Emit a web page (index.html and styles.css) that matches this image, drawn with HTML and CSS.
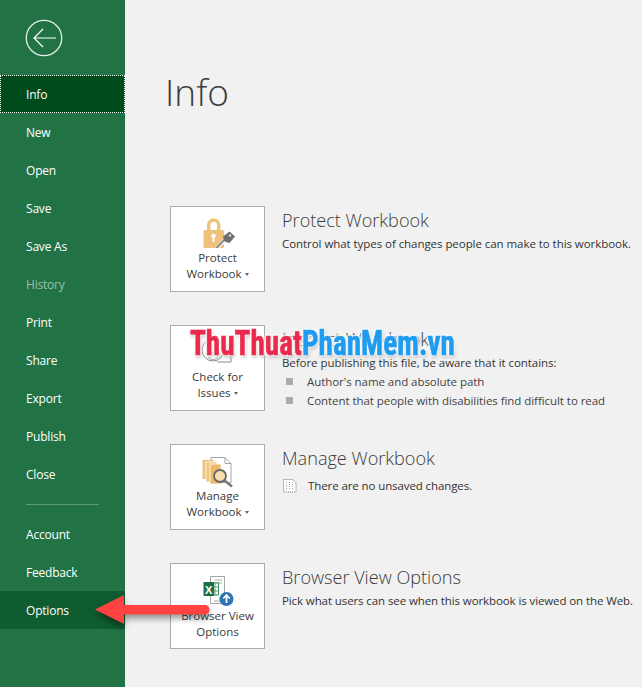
FILE: index.html
```html
<!DOCTYPE html>
<html lang="en">
<head>
<meta charset="utf-8">
<title>Info</title>
<link rel="stylesheet" href="styles.css">
</head>
<body>
<div class="app">
  <nav class="sidebar">
    <div class="back">
      <svg class="back-icon" width="38" height="38" viewBox="0 0 38 38"><circle cx="19" cy="19" r="17.7" fill="none" stroke="#e4eee8" stroke-width="1.3"/><path d="M31 19H9M18 10l-9 9 9 9" fill="none" stroke="#fff" stroke-width="1.2"/></svg>
    </div>
    <a class="item active">Info</a>
    <a class="item">New</a>
    <a class="item">Open</a>
    <a class="item">Save</a>
    <a class="item">Save As</a>
    <a class="item disabled">History</a>
    <a class="item">Print</a>
    <a class="item">Share</a>
    <a class="item">Export</a>
    <a class="item">Publish</a>
    <a class="item">Close</a>
    <div class="divider"></div>
    <a class="item">Account</a>
    <a class="item">Feedback</a>
    <a class="item hover">Options</a>
  </nav>
  <main class="main">
    <h1 class="title">Info</h1>
    <section class="row">
      <button class="tile">
        <svg class="tile-icon" width="36" height="36" viewBox="0 0 36 36"><path d="M7 17V11a6.700 6.700 0 0 1 13.400 0v6h-3.400V11a3.300 3.300 0 0 0-6.600 0v6z" fill="#eec27c"/><rect x="3.500" y="16" width="20.500" height="18" rx="1.500" fill="#eec27c"/><circle cx="13.500" cy="22" r="2.300" fill="#fff"/><rect x="12.600" y="23" width="1.800" height="5" fill="#fff"/><path d="M15 33.500l9-9.500 2.500 2.500-8 8.500h-3z" fill="#fff"/><path d="M15.500 33.500l9-9.500 1.500 1.500-8 8.500h-2.500z" fill="#8a8a8a"/><path d="M23 22.500l6.500-5 5.500 5-5.500 6.500-5-1.500z" fill="#6e6e6e"/><circle cx="30" cy="21.500" r="1.200" fill="#ddd"/></svg>
        <span class="tile-label">Protect<br>Workbook<i class="caret"></i></span>
      </button>
      <div class="desc">
        <h2 class="heading">Protect Workbook</h2>
        <p class="text">Control what types of changes people can make to this workbook.</p>
      </div>
    </section>
    <section class="row">
      <button class="tile">
        <svg class="tile-icon" width="36" height="36" viewBox="0 0 36 36"><circle cx="13" cy="17" r="11" fill="none" stroke="#8a8a8a"/><path d="M8 24a6 6 0 0 0 10 0" fill="none" stroke="#a5a5a5"/><path d="M22 12h9v17H17" fill="none" stroke="#8a8a8a"/></svg>
        <span class="tile-label">Check for<br>Issues<i class="caret"></i></span>
      </button>
      <div class="desc">
        <h2 class="heading">Inspect Workbook</h2>
        <p class="text">Before publishing this file, be aware that it contains:</p>
        <ul class="list">
          <li class="list-item">Author's name and absolute path</li>
          <li class="list-item">Content that people with disabilities find difficult to read</li>
        </ul>
      </div>
    </section>
    <section class="row">
      <button class="tile">
        <svg class="tile-icon" width="36" height="36" viewBox="0 0 36 36"><path d="M11 5.500h14l6 6v19H11z" fill="#fff" stroke="#a5a5a5"/><path d="M25 5.500v6h6" fill="none" stroke="#a5a5a5"/><rect x="2.500" y="8" width="11" height="19" fill="#f0c47c"/><rect x="6" y="10" width="11" height="20" fill="#f0c47c" stroke="#fff" stroke-width=".8"/><rect x="10" y="12" width="11" height="20" fill="#eeb968" stroke="#fff" stroke-width=".8"/><circle cx="20" cy="24" r="6" fill="#f6dcb0" stroke="#666" stroke-width="1.800"/><path d="M24.500 28.500L32 34.500" stroke="#7a7a7a" stroke-width="2.600"/></svg>
        <span class="tile-label">Manage<br>Workbook<i class="caret"></i></span>
      </button>
      <div class="desc">
        <h2 class="heading">Manage Workbook</h2>
        <p class="note"><svg class="note-icon" width="16" height="15" viewBox="0 0 16 15"><path d="M1.500 1.500h9l3.500 3v9.500H1.500z" fill="#fff" stroke="#777" stroke-dasharray="1 1"/><path d="M4.500 4v8M7.500 4v8M10.500 4v8" stroke="#aaa" stroke-dasharray="1 1"/></svg>There are no unsaved changes.</p>
      </div>
    </section>
    <section class="row">
      <button class="tile">
        <svg class="tile-icon" width="36" height="36" viewBox="0 0 36 36"><path d="M10.500 5.500h14v27h-14z" fill="#fff" stroke="#a5a5a5"/><path d="M15 9h7M15 12h7M19 27h3M14 30h8" stroke="#a8a8a8"/><path d="M12 12h6.500v12H12z" fill="#fff" stroke="#2d8a57"/><path d="M12 16h6.500M12 20h6.500M15 12v12" stroke="#5aa57f"/><path d="M3.500 11h10.500v14H3.500z" fill="#1e7145"/><text class="xl" x="5" y="22.500">X</text><circle cx="26.500" cy="28" r="7" fill="#2f75b5"/><path d="M26.500 32v-7.500M23.300 27.500l3.200-3.500 3.200 3.500" fill="none" stroke="#fff" stroke-width="1.800"/></svg>
        <span class="tile-label tile-label-low">Browser View<br>Options</span>
      </button>
      <div class="desc">
        <h2 class="heading">Browser View Options</h2>
        <p class="text text-tight">Pick what users can see when this workbook is viewed on the Web.</p>
      </div>
    </section>
  </main>
  <div class="watermark"><span class="wm-red">ThuThuat</span><span class="wm-blue">PhanMem.vn</span></div>
  <svg class="arrow" width="130" height="50" viewBox="0 0 130 50"><path d="M7 17.500L36 3v10h82a5 5 0 0 1 0 9.500H36V32z" fill="#ff4343"/></svg>
</div>
</body>
</html>
```
FILE: styles.css
```css
* { box-sizing: border-box; }
html, body { margin: 0; padding: 0; }
body { font-family: "Open Sans", "Noto Sans", sans-serif; color: #3a3a3a; background: #f1f1f1; }
.app { position: relative; display: flex; width: 642px; height: 687px; overflow: hidden; background: #f1f1f1; }
.sidebar { width: 125px; flex: none; background: #217346; display: flex; flex-direction: column; }
.back { height: 75px; padding: 19px 0 0 25px; }
.back-icon { display: block; }
.item { display: flex; align-items: center; height: 38px; padding-left: 26px; font-size: 12px; letter-spacing: -.2px; color: #fff; }
.item.active { background: #004b1c; outline: 1px dotted #fff; outline-offset: -1px; }
.item.disabled { color: #9dc0ab; }
.item.hover { background: #0f5c30; }
.divider { height: 1px; margin: 11px 26px 10px; background: #5a9877; }
.main { flex: 1; padding: 0 0 0 45px; }
.title { margin: 0 0 84px -5px; padding-top: 63px; height: 122px; font-size: 37px; line-height: 58px; font-weight: 300; color: #3b3b3b; }
.row { display: flex; height: 86px; margin-bottom: 33px; }
.tile { width: 95px; height: 86px; flex: none; padding: 7px 0 0; display: flex; flex-direction: column; align-items: center; background: #fff; border: 1px solid #ababab; font-family: inherit; color: #3a3a3a; }
.tile-icon { display: block; flex: none; margin-bottom: -2px; }
.tile-label { display: block; margin-top: 2px; font-size: 11.500px; line-height: 16px; text-align: center; }
.tile-label-low { margin-top: 3px; }
.caret { display: inline-block; margin-left: 3px; vertical-align: 2px; border-style: solid; border-color: #666 transparent transparent; border-width: 3px 2.500px 0; }
.desc { margin-left: 17px; min-width: 0; white-space: nowrap; }
.heading { margin: 0; height: 28px; font-size: 18.100px; line-height: 28px; font-weight: 300; color: #3b3b3b; }
.text { margin: 0; height: 19px; font-size: 11.500px; line-height: 19px; letter-spacing: -.055px; color: #333; }
.text-tight { letter-spacing: -.1px; }
.list { margin: 0; padding: 0; list-style: none; }
.list-item { position: relative; height: 19px; padding-left: 25px; font-size: 11.500px; line-height: 19px; letter-spacing: -.055px; color: #444; }
.list-item::before { content: ""; position: absolute; left: 4px; top: 6px; width: 7px; height: 7px; background: #ababab; }
.note { display: flex; align-items: center; margin: 4px 0 0; height: 19px; font-size: 11.500px; letter-spacing: -.1px; color: #333; }
.note-icon { margin-right: 10px; flex: none; }
.xl { font: bold 11px "Liberation Sans", sans-serif; fill: #fff; }
.watermark { position: absolute; left: 190px; top: 323px; font-family: "Liberation Sans Narrow", "Roboto Condensed", Roboto, sans-serif; font-weight: 700; font-size: 35px; line-height: 42px; white-space: nowrap; transform: scaleX(.835); transform-origin: left center; -webkit-text-stroke: .6px currentColor; text-shadow: 0 0 2px #fff, 0 0 2px #fff, 0 0 3px #fff, 0 0 4px #fff, 0 0 4px #fff, 1px 2px 4px #999; }
.wm-red { color: #ea2a4d; }
.wm-blue { color: #1f9cf0; }
.arrow { position: absolute; left: 88px; top: 592px; filter: drop-shadow(0 4px 3px rgba(0,0,0,.4)); }
```
